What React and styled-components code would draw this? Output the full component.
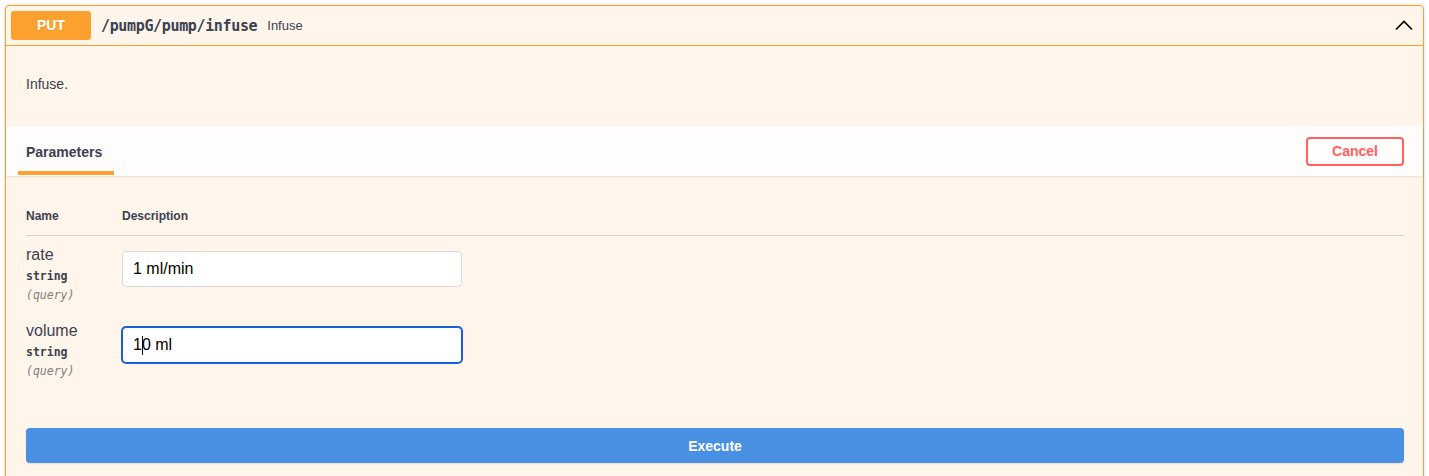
import React from 'react';
import styled, { createGlobalStyle } from 'styled-components';

const GlobalStyle = createGlobalStyle`
  html, body {
    margin: 0;
    padding: 0;
    background: #ffffff;
  }
  body {
    font-family: "Liberation Sans", Arial, sans-serif;
    color: #3b4151;
  }
  * {
    box-sizing: border-box;
  }
`;

const Page = styled.div`
  padding: 5px 5px 0;
`;

const Opblock = styled.div`
  border: 1px solid #fca130;
  border-radius: 4px;
  background: rgba(252, 161, 48, 0.1);
  box-shadow: 0 0 3px rgba(0, 0, 0, 0.19);
  min-height: 480px;
`;

const Summary = styled.div`
  display: flex;
  align-items: center;
  padding: 5px;
  border-bottom: 1px solid #fca130;
`;

const Method = styled.span`
  min-width: 80px;
  padding: 6px 0;
  border-radius: 3px;
  background: #fca130;
  color: #ffffff;
  font-size: 14px;
  font-weight: 700;
  line-height: 17px;
  text-align: center;
  text-shadow: 0 1px 0 rgba(0, 0, 0, 0.1);
`;

const Path = styled.span`
  padding: 0 10px;
  font-family: "DejaVu Sans Mono", "Liberation Mono", monospace;
  font-size: 15px;
  font-weight: 700;
  letter-spacing: -0.35px;
  color: #3b4151;
`;

const SummaryDesc = styled.span`
  flex: 1;
  font-size: 13px;
  color: #3b4151;
`;

const Arrow = styled.svg`
  width: 20px;
  height: 20px;
  margin-right: 4px;
`;

const Description = styled.div`
  padding: 28px 20px 31px;
  font-size: 14px;
  line-height: 21px;
  & p {
    margin: 0;
  }
`;

const SectionHeader = styled.div`
  display: flex;
  align-items: center;
  justify-content: space-between;
  min-height: 50px;
  padding: 8px 19px 8px 20px;
  background: rgba(255, 255, 255, 0.8);
  box-shadow: 0 1px 2px rgba(0, 0, 0, 0.1);
`;

const Tab = styled.div`
  position: relative;
  font-size: 14px;
  font-weight: 700;
  color: #3b4151;
  padding-top: 2px;
  &::after {
    content: '';
    position: absolute;
    left: -8px;
    right: -12px;
    bottom: -15px;
    height: 4px;
    background: #fca130;
  }
`;

const CancelButton = styled.button`
  padding: 5px 24px;
  border: 2px solid #ff6060;
  border-radius: 4px;
  background: transparent;
  color: #ff6060;
  font-family: "Liberation Sans", Arial, sans-serif;
  font-size: 14px;
  font-weight: 700;
  line-height: 14px;
  height: 29px;
`;

const TableContainer = styled.div`
  padding: 20px 19px 20px 20px;
`;

const ParamGrid = styled.div`
  display: grid;
  grid-template-columns: 96px 1fr;
`;

const ColHeader = styled.div`
  padding: 13px 0 12px;
  font-size: 12px;
  font-weight: 700;
  line-height: 14px;
  color: #3b4151;
  border-bottom: 1px solid rgba(59, 65, 81, 0.2);
`;

const NameCell = styled.div`
  padding: 10px 0;
`;

const ParamName = styled.div`
  font-size: 16px;
  line-height: 18px;
  color: #3b4151;
`;

const ParamType = styled.div`
  padding: 5px 0 0;
  font-family: "DejaVu Sans Mono", "Liberation Mono", monospace;
  font-size: 11.5px;
  font-weight: 700;
  line-height: 14px;
  color: #3b4151;
`;

const ParamIn = styled.div`
  padding-top: 5px;
  font-family: "DejaVu Sans Mono", "Liberation Mono", monospace;
  font-size: 11.5px;
  font-style: italic;
  line-height: 14px;
  color: #808080;
`;

const ValueCell = styled.div`
  padding: 10px 0;
`;

const InputWrap = styled.div`
  position: relative;
  width: 340px;
  margin-top: 5px;
`;

const Input = styled.input`
  display: block;
  width: 340px;
  height: 36px;
  padding: 8px 10px;
  border: 1px solid ${p => (p.$focused ? '#1460d6' : '#d9d9d9')};
  border-radius: 4px;
  background: #ffffff;
  box-shadow: ${p => (p.$focused ? '0 0 0 1px #1460d6' : 'none')};
  font-family: "Liberation Sans", Arial, sans-serif;
  font-size: 16px;
  color: #000000;
  outline: none;
`;

/* text cursor sitting after the first character of the focused field */
const Caret = styled.span`
  position: absolute;
  left: 20px;
  top: 9px;
  width: 1px;
  height: 19px;
  background: #000000;
  pointer-events: none;
`;

const ExecuteWrapper = styled.div`
  padding: 20px 19px 20px 20px;
`;

const ExecuteButton = styled.button`
  width: 100%;
  height: 35px;
  border: none;
  border-radius: 4px;
  background: #4990e2;
  color: #ffffff;
  font-family: "Liberation Sans", Arial, sans-serif;
  font-size: 14px;
  font-weight: 700;
  box-shadow: 0 1px 2px rgba(0, 0, 0, 0.1);
`;

const params = [
  { name: 'rate', type: 'string', in: '(query)', value: '1 ml/min' },
  { name: 'volume', type: 'string', in: '(query)', value: '10 ml', focused: true },
];

function App() {
  return (
    <Page>
      <GlobalStyle />
      <Opblock>
        <Summary>
          <Method>PUT</Method>
          <Path>/pumpG/pump/infuse</Path>
          <SummaryDesc>Infuse</SummaryDesc>
          <Arrow viewBox="0 0 20 20">
            <path d="M2 13.5 L10 5.5 L18 13.5" fill="none" stroke="#000" strokeWidth="1.6" />
          </Arrow>
        </Summary>
        <Description>
          <p>Infuse.</p>
        </Description>
        <SectionHeader>
          <Tab>Parameters</Tab>
          <CancelButton>Cancel</CancelButton>
        </SectionHeader>
        <TableContainer>
          <ParamGrid>
            <ColHeader>Name</ColHeader>
            <ColHeader>Description</ColHeader>
            {params.map(p => (
              <React.Fragment key={p.name}>
                <NameCell>
                  <ParamName>{p.name}</ParamName>
                  <ParamType>{p.type}</ParamType>
                  <ParamIn>{p.in}</ParamIn>
                </NameCell>
                <ValueCell>
                  <InputWrap>
                    <Input defaultValue={p.value} $focused={p.focused} />
                    {p.focused && <Caret />}
                  </InputWrap>
                </ValueCell>
              </React.Fragment>
            ))}
          </ParamGrid>
        </TableContainer>
        <ExecuteWrapper>
          <ExecuteButton>Execute</ExecuteButton>
        </ExecuteWrapper>
      </Opblock>
    </Page>
  );
}

export default App;
